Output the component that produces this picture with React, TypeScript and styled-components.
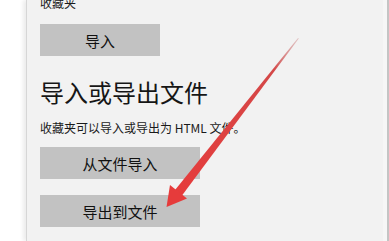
import React from "react";
import styled, { createGlobalStyle } from "styled-components";

const Global = createGlobalStyle`
  html, body { margin: 0; padding: 0; background: #ffffff; }
  body { width: 389px; height: 241px; overflow: hidden; }
  #root { width: 389px; height: 241px; }
`;

const Page = styled.div`
  position: relative;
  display: flex;
  width: 389px;
  height: 241px;
  overflow: hidden;
  background: #ffffff;
  font-family: "Noto Sans CJK SC", "Noto Sans", sans-serif;
`;

const Strip = styled.div`
  width: 26px;
  flex: none;
  background: #ffffff;
`;

const Panel = styled.div`
  flex: 1;
  display: flex;
  flex-direction: column;
  align-items: flex-start;
  padding-left: 13px;
  background: #f2f2f2;
  border-left: 1px solid #d6d6d6;
  border-right: 2px solid #c4c4c4;
  box-shadow: -3px 0 4px rgba(0, 0, 0, 0.08), inset -4px 0 0 #f6f6f6;
`;

const Label = styled.div`
  margin-top: -5px;
  font-size: 12px;
  line-height: 16px;
  color: #1a1a1a;
`;

const Heading = styled.div`
  margin-top: 20px;
  font-size: 24px;
  line-height: 32px;
  color: #161616;
  font-weight: 400;
`;

const Desc = styled.div`
  margin-top: 12px;
  font-size: 12px;
  line-height: 16px;
  color: #1a1a1a;
`;

const Button = styled.div<{ $w: number; $mt: number }>`
  display: flex;
  align-items: center;
  justify-content: center;
  width: ${(p) => p.$w}px;
  height: 32px;
  margin-top: ${(p) => p.$mt}px;
  background: #c2c2c2;
  color: #111111;
  font-size: 15px;
`;

const Arrow = styled.svg`
  position: absolute;
  left: 0;
  top: 0;
  pointer-events: none;
`;

export default function App() {
  return (
    <>
      <Global />
      <Page>
        <Strip />
        <Panel>
          <Label>收藏夹</Label>
          <Button $w={120} $mt={13}>导入</Button>
          <Heading>导入或导出文件</Heading>
          <Desc>收藏夹可以导入或导出为 HTML 文件。</Desc>
          <Button $w={160} $mt={11}>从文件导入</Button>
          <Button $w={160} $mt={16}>导出到文件</Button>
        </Panel>
        <Arrow width="389" height="241" viewBox="0 0 389 241">
          <defs>
            <linearGradient id="g" x1="298" y1="38" x2="175" y2="195" gradientUnits="userSpaceOnUse">
              <stop offset="0" stopColor="#c98080" stopOpacity="0.4" />
              <stop offset="0.2" stopColor="#d44848" />
              <stop offset="1" stopColor="#e63b3b" />
            </linearGradient>
          </defs>
          <polygon
            points="298,38 298.8,38.6 182,195.5 175,190"
            fill="url(#g)"
          />
          <polygon points="166.5,207 170,185 187,198.5" fill="#e63b3b" />
        </Arrow>
      </Page>
    </>
  );
}
